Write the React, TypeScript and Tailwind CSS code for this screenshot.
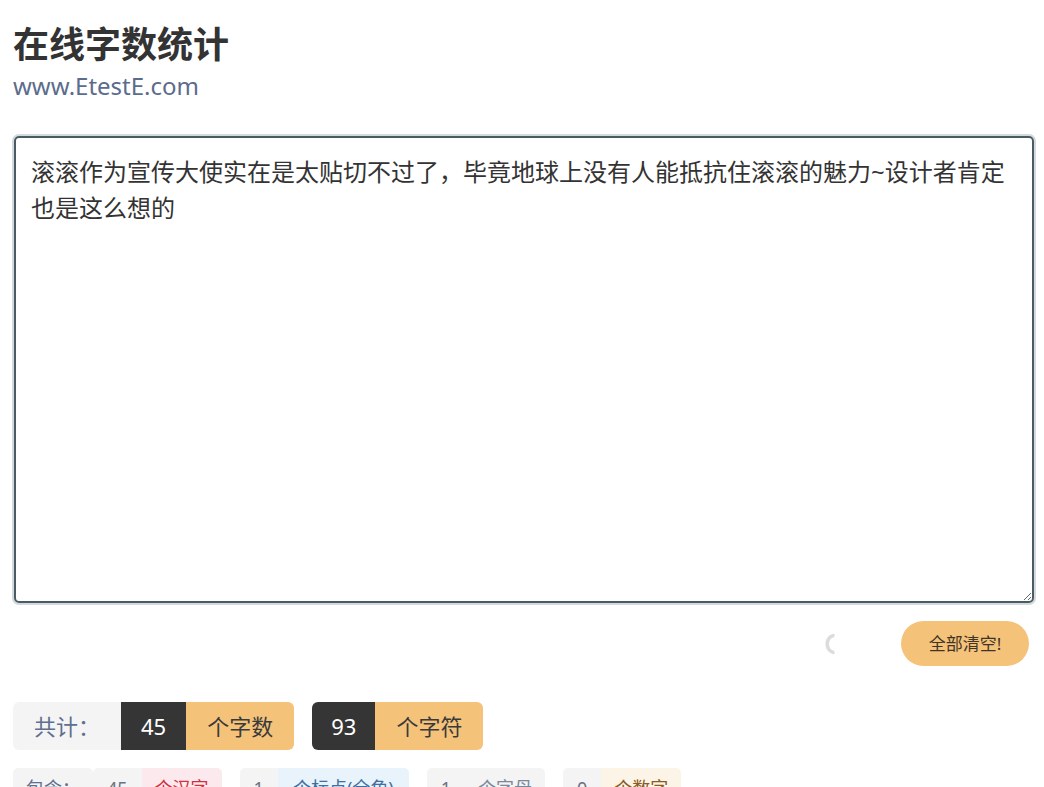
import { useState } from "react";

const FONT = "font-['Noto_Sans','Noto_Sans_CJK_SC',sans-serif]";

const initialText =
  "滚滚作为宣传大使实在是太贴切不过了，毕竟地球上没有人能抵抗住滚滚的魅力~设计者肯定也是这么想的";

function Spinner() {
  return (
    <svg width="22" height="22" viewBox="0 0 22 22" className="shrink-0">
      <path
        d="M14 2.6 A9 9 0 0 0 14 19.4"
        fill="none"
        stroke="#dcdcdc"
        strokeWidth="3.5"
        strokeLinecap="round"
      />
    </svg>
  );
}

function SubStat({ num, label, labelClass }: { num: number; label: string; labelClass: string }) {
  return (
    <div className="flex rounded-[5px] overflow-hidden text-[18px] leading-[40px]">
      <span className="bg-[#f4f4f5] text-[#6b7280] px-[14px]">{num}</span>
      <span className={labelClass}>{label}</span>
    </div>
  );
}

export default function App() {
  const [text, setText] = useState(initialText);
  const hanzi = (text.match(/[\u4e00-\u9fa5]/g) || []).length;

  return (
    <div className={"min-h-screen bg-white pl-[13px] pr-[10px] pt-[18px] text-[#333] " + FONT}>
      <h1 className="text-[36px] leading-[54px] font-bold text-[#333]">在线字数统计</h1>
      <div className="text-[24px] leading-[28px] text-[#5b6c8c]">www.EtestE.com</div>

      <textarea
        value={text}
        onChange={(e) => setText(e.target.value)}
        className="block mt-[36px] ml-px w-[1020px] h-[467px] border-[2.5px] border-[#4a5c63] rounded-[5px] shadow-[0_0_0_2px_#d3d9dc] outline-none px-[15px] pt-[16px] text-[24px] leading-[36px] text-[#333] resize-y"
      />

      <div className="flex justify-end items-center gap-[60px] mt-[18px] mr-[5px]">
        <Spinner />
        <button className="w-[128px] h-[45px] rounded-full bg-[#f5c27a] text-[17px] text-[#3f3427]">
          全部清空!
        </button>
      </div>

      <div className="flex gap-[18px] mt-[36px]">
        <div className="flex rounded-[6px] overflow-hidden text-[22px] leading-[48px]">
          <span className="bg-[#f4f4f5] text-[#5e6f8f] px-[21px]">共计：</span>
          <span className="bg-[#353535] text-white px-[20px]">{hanzi}</span>
          <span className="bg-[#f5c27a] text-[#3a3a3a] px-[21px]">个字数</span>
        </div>
        <div className="flex rounded-[6px] overflow-hidden text-[22px] leading-[48px]">
          <span className="bg-[#353535] text-white px-[19px]">93</span>
          <span className="bg-[#f5c27a] text-[#3a3a3a] px-[21px]">个字符</span>
        </div>
      </div>

      <div className="flex items-start gap-[18px] mt-[18px]">
        <div className="flex">
          <span className="bg-[#f4f4f5] text-[#5e6f8f] px-[13px] rounded-[5px] text-[18px] leading-[40px]">
            包含：
          </span>
          <SubStat num={hanzi} label="个汉字" labelClass="px-[13px] bg-[#fce9ed] text-[#d0313f]" />
        </div>
        <SubStat num={1} label="个标点(全角)" labelClass="px-[15px] bg-[#e9f3fb] text-[#3d6fa3]" />
        <SubStat num={1} label="个字母" labelClass="px-[13px] bg-[#f4f4f5] text-[#7a8899]" />
        <SubStat num={0} label="个数字" labelClass="px-[13px] bg-[#fdf4e8] text-[#8a5a20]" />
      </div>
    </div>
  );
}
